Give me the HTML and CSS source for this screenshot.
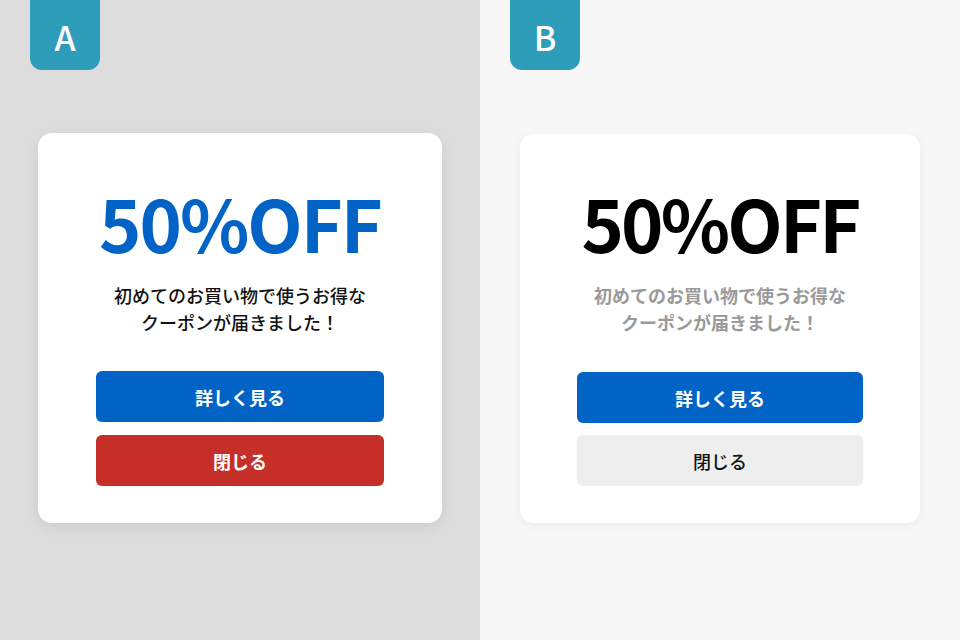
FILE: index.html
```html
<!DOCTYPE html>
<html lang="ja">
<head>
<meta charset="utf-8">
<link rel="stylesheet" href="styles.css">
</head>
<body>
<div class="page">
  <section class="panel panel-a">
    <div class="badge">A</div>
    <div class="card card-a">
      <h1 class="title">50%OFF</h1>
      <p class="lead">初めてのお買い物で使うお得な<br>クーポンが届きました！</p>
      <div class="actions">
        <button class="btn btn-primary">詳しく見る</button>
        <button class="btn btn-danger">閉じる</button>
      </div>
    </div>
  </section>
  <section class="panel panel-b">
    <div class="badge">B</div>
    <div class="card card-b">
      <h1 class="title">50%OFF</h1>
      <p class="lead">初めてのお買い物で使うお得な<br>クーポンが届きました！</p>
      <div class="actions">
        <button class="btn btn-primary">詳しく見る</button>
        <button class="btn btn-light">閉じる</button>
      </div>
    </div>
  </section>
</div>
</body>
</html>
```
FILE: styles.css
```css
* { box-sizing: border-box; }
html, body { margin: 0; padding: 0; }
body {
  font-family: "Noto Sans CJK JP", "Noto Sans", sans-serif;
  width: 960px;
  height: 640px;
  overflow: hidden;
}
.page {
  display: flex;
  width: 960px;
  height: 640px;
}
.panel {
  position: relative;
  width: 480px;
  height: 640px;
  display: flex;
  flex-direction: column;
  align-items: center;
  padding-top: 133px;
}
.panel-a { background: #dddddd; }
.panel-b { background: #f7f7f7; }
.badge {
  position: absolute;
  left: 30px;
  top: 0;
  width: 70px;
  height: 70px;
  background: #2e9db9;
  color: #fff;
  border-radius: 0 0 12px 12px;
  display: flex;
  align-items: center;
  justify-content: center;
  font-size: 34px;
  font-weight: 500;
  line-height: 1;
  padding-top: 4px;
}
.card {
  background: #fff;
  border-radius: 14px;
  display: flex;
  flex-direction: column;
  align-items: stretch;
  text-align: center;
  height: 390px;
  padding-top: 44px;
}
.card-a {
  width: 404px;
  padding-left: 58px;
  padding-right: 58px;
  box-shadow: 0 4px 14px rgba(0,0,0,0.08);
}
.card-b {
  width: 400px;
  padding-left: 57px;
  padding-right: 57px;
  margin-top: 1px;
  height: 389px;
  padding-top: 43px;
  box-shadow: 0 2px 12px rgba(0,0,0,0.05);
}
.title {
  margin: 0;
  font-size: 72px;
  font-weight: 700;
  line-height: 90px;
  letter-spacing: -2px;
}
.card-a .title { color: #0063c5; }
.card-b .title { color: #000; letter-spacing: -2.8px; }
.lead {
  margin: 15px 0 0;
  font-size: 18px;
  line-height: 27px;
  font-weight: 500;
}
.card-a .lead { color: #111; }
.card-b .lead { color: #9a9a9a; font-weight: 700; }
.actions {
  margin-top: 35px;
  display: flex;
  flex-direction: column;
  gap: 13px;
}
.card-b .actions { margin-top: 36px; gap: 12px; }
.btn {
  font-family: inherit;
  border: none;
  height: 51px;
  border-radius: 6px;
  font-size: 18px;
  font-weight: 700;
  color: #fff;
  padding: 0;
}
.btn-primary { background: #0063c5; }
.btn-danger { background: #c62f28; }
.btn-light { background: #eeeeee; color: #111; font-weight: 500; }
```
